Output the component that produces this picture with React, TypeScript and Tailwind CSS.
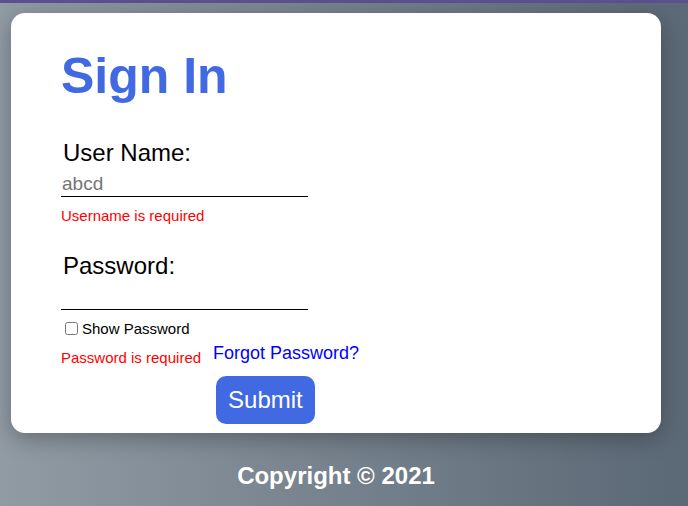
export default function App() {
  return (
    <div
      className="min-h-screen w-full bg-linear-to-r from-[#919ba4] to-[#5b6875] border-t-[3px] border-[#5b5190]"
      style={{ fontFamily: '"Liberation Sans", Arial, sans-serif' }}
    >
      <div className="w-[672px] px-[11px] pt-[10px]">
        <div className="bg-white rounded-[14px] shadow-[0_6px_22px_rgba(0,0,0,0.28)] pl-[50px] pt-[35px] pb-[9px]">
          <h1 className="text-[50px] leading-[56px] font-bold text-[#4169e1]">Sign In</h1>

          <form className="mt-[35px] flex flex-col items-start" onSubmit={(e) => e.preventDefault()}>
            <label className="ml-[2px] text-[24px] leading-[28px] text-black">User Name:</label>
            <input
              type="text"
              placeholder="abcd"
              className="mt-[4px] w-[247px] h-[26px] px-[1px] border-b border-black text-[19px] leading-[22px] placeholder:text-[#757575] focus:outline-none"
            />
            <p className="mt-[10px] text-[15px] leading-[17px] text-[#ff0000]">Username is required</p>

            <label className="mt-[28px] ml-[2px] text-[24px] leading-[28px] text-black">Password:</label>
            <input
              type="password"
              className="mt-[4px] w-[247px] h-[26px] px-[1px] border-b border-black text-[19px] leading-[22px] focus:outline-none"
            />

            <label className="mt-[10px] ml-[4px] flex items-center gap-[4px] text-[15px] leading-[17px] text-black">
              <input type="checkbox" className="w-[13px] h-[13px]" />
              Show Password
            </label>

            <div className="mt-[6px] flex items-start gap-[12px]">
              <p className="mt-[6px] text-[15px] leading-[17px] text-[#ff0000]">Password is required</p>
              <div className="flex flex-col items-start">
                <a href="#" className="text-[18px] leading-[21px] text-[#0000ff]">
                  Forgot Password?
                </a>
                <button
                  type="submit"
                  className="mt-[12px] ml-[3px] bg-[#4169e1] text-white text-[24px] leading-[28px] px-[12px] py-[10px] rounded-[10px]"
                >
                  Submit
                </button>
              </div>
            </div>
          </form>
        </div>

        <p className="mt-[30px] text-center text-white font-bold text-[24px] leading-[26px]">
          Copyright © 2021
        </p>
      </div>
    </div>
  );
}
